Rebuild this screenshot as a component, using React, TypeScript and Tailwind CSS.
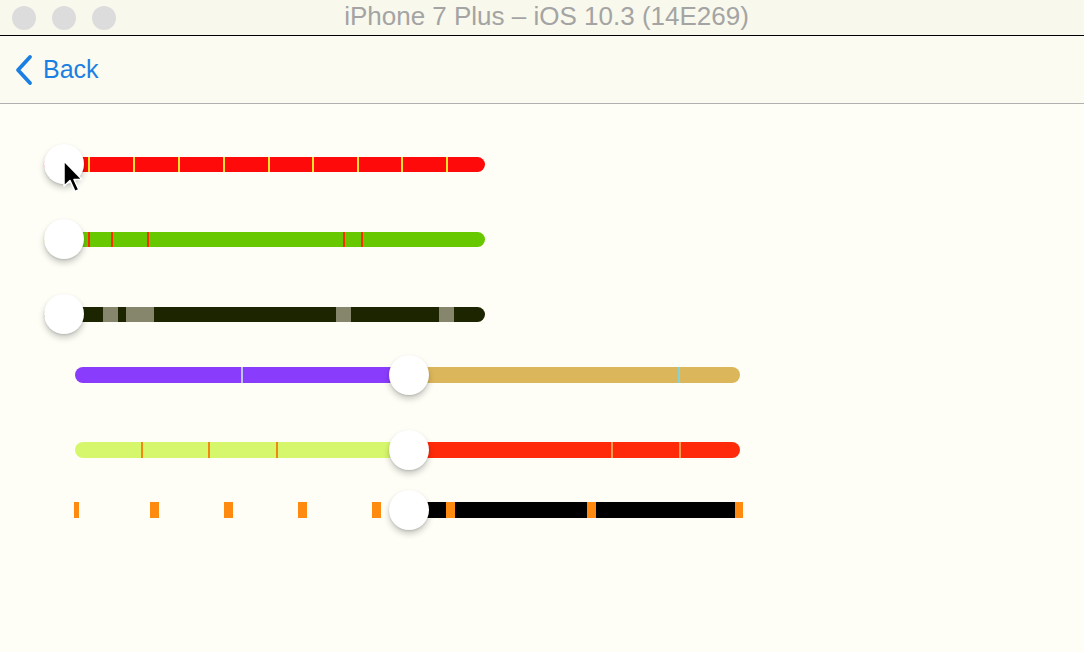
import React from 'react'

type Tick = { x: number; w: number; color: string }

const font = { fontFamily: '"Liberation Sans", Arial, sans-serif' }

// Thumb sits on top of the track, so it's the one absolutely placed thing per row
function Thumb({ left }: { left: number }) {
  return (
    <div
      className="absolute top-0 h-[40px] w-[40px] rounded-full bg-white shadow-[0_4px_6px_rgba(0,0,0,0.2),0_1px_2px_rgba(0,0,0,0.12)]"
      style={{ left }}
    />
  )
}

function Ticks({ ticks, origin }: { ticks: Tick[]; origin: number }) {
  return (
    <>
      {ticks.map((t, i) => (
        <div
          key={i}
          className="absolute top-0 h-full"
          style={{ left: t.x - origin, width: t.w, background: t.color }}
        />
      ))}
    </>
  )
}

function Cursor() {
  return (
    <svg className="absolute left-[62px] top-[15px]" width="24" height="36" viewBox="0 0 24 36">
      <path
        d="M2 2 L2 27 L8 21.5 L13 32.5 L16.8 30.8 L12 20.5 L20 20.5 Z"
        fill="#000"
        stroke="#fff"
        strokeWidth="1.5"
        strokeLinejoin="round"
      />
    </svg>
  )
}

// rows 1-3: thumb parked at the minimum, track fully coloured
function MinSlider({
  color,
  ticks,
  cursor,
}: {
  color: string
  ticks: Tick[]
  cursor?: boolean
}) {
  return (
    <div className="relative h-[40px]">
      <div className="absolute left-[44px] top-[13px] h-[15px] w-[441px] overflow-hidden rounded-full" style={{ background: color }}>
        <Ticks ticks={ticks} origin={44} />
      </div>
      <Thumb left={44} />
      {cursor && <Cursor />}
    </div>
  )
}

// rows 4-6: thumb in the middle, min/max colours either side
function MidSlider({
  minColor,
  maxColor,
  minTicks,
  maxTicks,
  rounded = true,
  maxWidth = 331,
}: {
  minColor: string
  maxColor: string
  minTicks: Tick[]
  maxTicks: Tick[]
  rounded?: boolean
  maxWidth?: number
}) {
  return (
    <div className="relative h-[40px]">
      <div className={`absolute left-[75px] top-[12px] flex h-[16px] ${rounded ? 'overflow-hidden rounded-full' : ''}`}>
        <div className="relative h-full w-[334px]" style={{ background: minColor }}>
          <Ticks ticks={minTicks} origin={75} />
        </div>
        <div className="relative h-full" style={{ background: maxColor, width: maxWidth }}>
          <Ticks ticks={maxTicks} origin={409} />
        </div>
      </div>
      <Thumb left={389} />
    </div>
  )
}

const yellow = '#f7e32a'
const redTick = '#ff2a00'

export default function App() {
  const row1Ticks = [88, 133, 178, 223, 268, 312, 357, 401, 446].map(x => ({ x, w: 2, color: yellow }))
  const row2Ticks = [88, 111, 147, 343, 361].map(x => ({ x, w: 2, color: redTick }))
  const row3Ticks: Tick[] = [
    { x: 103, w: 15, color: '#86866c' },
    { x: 126, w: 28, color: '#86866c' },
    { x: 336, w: 15, color: '#86866c' },
    { x: 439, w: 15, color: '#86866c' },
  ]
  const orange = '#ff8a10'

  return (
    <div className="flex h-[652px] w-[1084px] flex-col overflow-hidden bg-[#fefef7]" style={font}>
      {/* window title bar */}
      <div className="relative flex h-[36px] shrink-0 items-center border-b-[1.5px] border-black bg-[#f8f8ec]">
        <div className="flex gap-[16px] pl-[12px]">
          <div className="h-[24px] w-[24px] rounded-full bg-[#dcdcdc]" />
          <div className="h-[24px] w-[24px] rounded-full bg-[#dcdcdc]" />
          <div className="h-[24px] w-[24px] rounded-full bg-[#dcdcdc]" />
        </div>
        <div className="absolute inset-x-0 top-[-2px] pl-[9px] text-center text-[26px] leading-[36px] text-[#a4a4a4]">
          iPhone 7 Plus – iOS 10.3 (14E269)
        </div>
      </div>

      {/* nav bar */}
      <div className="flex h-[68px] shrink-0 items-center border-b border-[#b0b0b0] bg-[#fbfbf1] pl-[14px]">
        <svg width="20" height="32" viewBox="0 0 20 32" className="mr-[9px]">
          <path d="M16 3 L4 16 L16 29" fill="none" stroke="#1b7fe3" strokeWidth="3.8" strokeLinecap="round" strokeLinejoin="round" />
        </svg>
        <span className="text-[25px] leading-none text-[#1b7fe3]">Back</span>
      </div>

      {/* sliders */}
      <div className="flex flex-col pt-[40px]">
        <MinSlider color="#fe0a0a" ticks={row1Ticks} cursor />
        <div className="mt-[35px]">
          <MinSlider color="#68c800" ticks={row2Ticks} />
        </div>
        <div className="mt-[35px]">
          <MinSlider color="#1c2500" ticks={row3Ticks} />
        </div>
        <div className="mt-[21px]">
          <MidSlider
            minColor="#8a3cfd"
            maxColor="#dbb65a"
            minTicks={[{ x: 241, w: 2, color: '#b9c6f2' }]}
            maxTicks={[{ x: 678, w: 2, color: '#86d2d6' }]}
          />
        </div>
        <div className="mt-[35px]">
          <MidSlider
            minColor="#d6f66c"
            maxColor="#ff2a0a"
            minTicks={[141, 208, 276].map(x => ({ x, w: 2, color: '#ee8a12' }))}
            maxTicks={[611, 679].map(x => ({ x, w: 2, color: '#ff9a4e' }))}
          />
        </div>
        <div className="mt-[20px]">
          <MidSlider
            minColor="transparent"
            maxColor="#000"
            rounded={false}
            maxWidth={334}
            minTicks={[
              { x: 74, w: 5, color: orange },
              { x: 150, w: 9, color: orange },
              { x: 224, w: 9, color: orange },
              { x: 298, w: 9, color: orange },
              { x: 372, w: 9, color: orange },
            ]}
            maxTicks={[
              { x: 446, w: 9, color: orange },
              { x: 587, w: 9, color: orange },
              { x: 735, w: 8, color: orange },
            ]}
          />
        </div>
      </div>
    </div>
  )
}
